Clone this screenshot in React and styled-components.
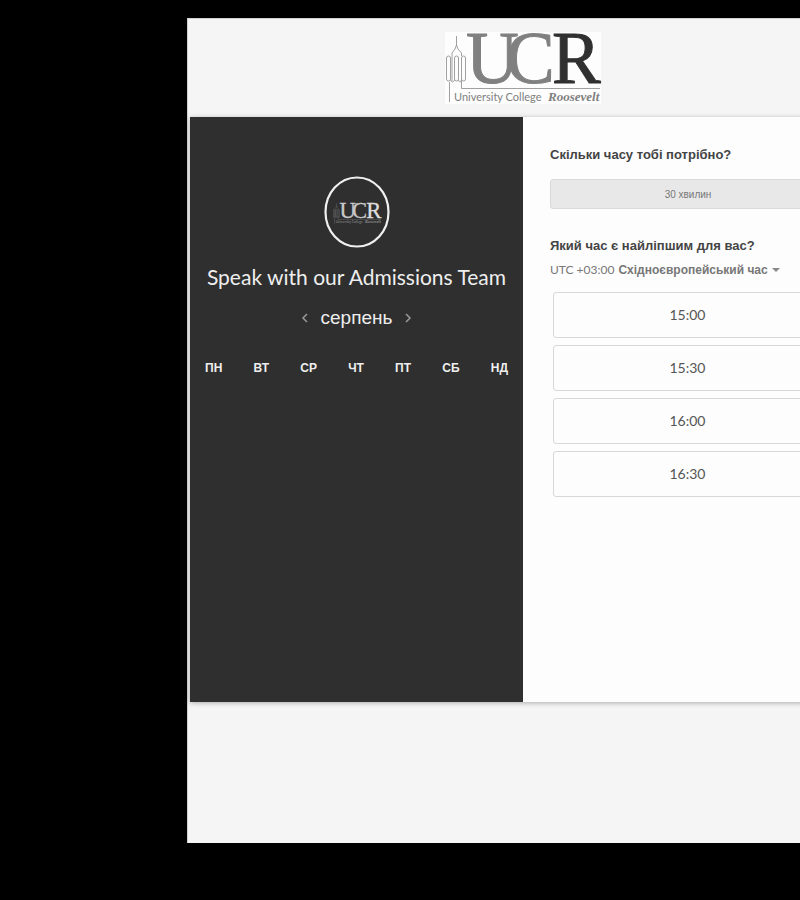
import React from "react";
import styled, { createGlobalStyle } from "styled-components";

const GlobalStyle = createGlobalStyle`
  * { box-sizing: border-box; }
  html { background: #000; }
  body { margin: 0; background: #000; font-family: "Liberation Sans", Arial, sans-serif; }
  button, select { font: inherit; color: inherit; }
`;

const Stage = styled.main`
  min-height: 100vh;
  padding: 18px 0 57px 187px;
  overflow: hidden;
  display: flex;
`;

const Page = styled.div`
  flex: 1 0 auto;
  min-width: 672px;
  padding: 0 3px;
  background: #f5f5f5;
  box-shadow: inset 1px 1px 0 #d0d0d0;
`;

const Header = styled.header`
  display: flex;
  justify-content: center;
  padding: 14px 0 13px;
`;

const Logo = styled.svg`
  display: block;
  width: 156px;
  height: 72px;
  overflow: visible;
`;

const Card = styled.section`
  display: grid;
  grid-template-columns: minmax(0, 1fr) minmax(0, 1fr);
  min-height: 585px;
  background: #fdfdfd;
  box-shadow: 0 1px 5px rgba(0, 0, 0, 0.3);
`;

const DatePanel = styled.div`
  display: flex;
  flex-direction: column;
  align-items: center;
  padding: 59px 15px 0;
  background: #2f2f2f;
  color: #eee;
`;

const Avatar = styled.svg`
  display: block;
  width: 66px;
  height: 72px;
`;

const Title = styled.h1`
  margin: 14px 0 0;
  font: 400 21px/30px Lato, sans-serif;
  white-space: nowrap;
`;

const MonthNav = styled.div`
  display: flex;
  align-items: center;
  gap: 12px;
  margin-top: 14px;
`;

const Month = styled.h2`
  margin: 0;
  font-size: 19px;
  line-height: 24px;
  font-weight: 400;
`;

const Arrow = styled.button`
  display: flex;
  padding: 0;
  border: 0;
  background: none;
  color: #999;
  cursor: pointer;
`;

const Weekdays = styled.ul`
  display: flex;
  justify-content: space-between;
  align-self: stretch;
  margin: 30px 0 0;
  padding: 0;
  list-style: none;
  font-size: 12px;
  line-height: 16px;
  font-weight: 700;
`;

const TimePanel = styled.div`
  padding: 28px 30px 0 27px;
  color: #444;
`;

const Question = styled.h3`
  margin: 0;
  font-size: 13px;
  line-height: 20px;
  font-weight: 700;
`;

const Duration = styled.button`
  display: block;
  width: 100%;
  height: 30px;
  margin: 14px 0 27px;
  padding: 0;
  border: 1px solid #d9d9d9;
  border-radius: 3px;
  background: #e8e8e8;
  font-size: 10px;
  color: #777;
`;

const Zone = styled.div`
  display: flex;
  align-items: center;
  gap: 4px;
  height: 28px;
  color: #777;
`;

const ZoneLabel = styled.label`
  font: 400 12px/20px Lato, sans-serif;
`;

const ZoneSelect = styled.select`
  appearance: none;
  padding: 0;
  border: 0;
  background: none;
  font-size: 12px;
  line-height: 20px;
  font-weight: 700;
`;

const Slots = styled.div`
  display: grid;
  gap: 7px;
  padding: 8px 4px 0 3px;
`;

const Slot = styled.button`
  height: 46px;
  padding: 0;
  border: 1px solid #d8d8d8;
  border-radius: 3px;
  background: #fdfdfd;
  font: 400 14px/20px Lato, sans-serif;
  color: #555;
  cursor: pointer;
`;

const days = ["ПН", "ВТ", "СР", "ЧТ", "ПТ", "СБ", "НД"];
const times = ["15:00", "15:30", "16:00", "16:30"];

const serif = '"Liberation Serif", serif';

function Mark({ main, strong, line }) {
  return (
    <>
      <g fill="none" stroke={line} strokeWidth="1">
        <path d="M4.5 70V50M11.5 4V14M11.5 13L10 17L7 21V49M11.5 13L13 17L16.5 21V24M16.5 47V56.5H155" />
        <rect x="1.5" y="24" width="4" height="25" rx="2" />
        <rect x="9.5" y="24" width="4" height="25" rx="2" />
        <rect x="16.5" y="24" width="4" height="25" rx="2" />
        <path d="M5.5 48Q7.500 52 9.500 48M13.500 48Q15 52 16.500 48" />
      </g>
      <g fontFamily={serif} fontSize="73" strokeWidth="1">
        <text x="21" y="51" fill={main} stroke={main}>U</text>
        <text x="61" y="51" fill={main} stroke={main}>C</text>
        <text x="107" y="51" fill={strong} stroke={strong}>R</text>
      </g>
    </>
  );
}

function Wordmark({ fill }) {
  return (
    <g fill={fill}>
      <text x="9" y="69" fontFamily="Lato, sans-serif" fontSize="11">University College</text>
      <text x="103" y="69" fontFamily={serif} fontSize="13" fontWeight="700" fontStyle="italic">Roosevelt</text>
    </g>
  );
}

export default function App() {
  return (
    <>
      <GlobalStyle />
      <Stage>
        <Page>
          <Header>
            <Logo viewBox="0 0 156 72" role="img" aria-label="University College Roosevelt">
              <rect width="156" height="72" fill="#fdfdfd" />
              <Mark main="#808080" strong="#303030" line="#a0a0a0" />
              <Wordmark fill="#808080" />
            </Logo>
          </Header>
          <Card>
            <DatePanel>
              <Avatar viewBox="0 0 66 72" role="img" aria-label="UCR">
                <ellipse cx="33" cy="36" rx="31.500" ry="34.500" fill="none" stroke="#f0f0f0" strokeWidth="2.200" />
                <g transform="translate(9 26) scale(.31)">
                  <Mark main="#c8c8c8" strong="#dedede" line="#858585" />
                  <Wordmark fill="#909090" />
                </g>
              </Avatar>
              <Title>Speak with our Admissions Team</Title>
              <MonthNav>
                <Arrow aria-label="Попередній місяць">
                  <svg width="8" height="12" viewBox="0 0 8 12" fill="none" stroke="currentColor" strokeWidth="1.500">
                    <path d="M6 2L2 6L6 10" />
                  </svg>
                </Arrow>
                <Month>серпень</Month>
                <Arrow aria-label="Наступний місяць">
                  <svg width="8" height="12" viewBox="0 0 8 12" fill="none" stroke="currentColor" strokeWidth="1.500">
                    <path d="M2 2L6 6L2 10" />
                  </svg>
                </Arrow>
              </MonthNav>
              <Weekdays>
                {days.map((d) => <li key={d}>{d}</li>)}
              </Weekdays>
            </DatePanel>
            <TimePanel>
              <Question>Скільки часу тобі потрібно?</Question>
              <Duration>30 хвилин</Duration>
              <Question>Який час є найліпшим для вас?</Question>
              <Zone>
                <ZoneLabel htmlFor="zone">UTC +03:00</ZoneLabel>
                <ZoneSelect id="zone">
                  <option>Східноєвропейський час</option>
                </ZoneSelect>
                <svg width="8" height="4" viewBox="0 0 8 4" aria-hidden="true">
                  <path d="M0 0H8L4 4Z" fill="#888" />
                </svg>
              </Zone>
              <Slots>
                {times.map((t) => <Slot key={t}>{t}</Slot>)}
              </Slots>
            </TimePanel>
          </Card>
        </Page>
      </Stage>
    </>
  );
}
